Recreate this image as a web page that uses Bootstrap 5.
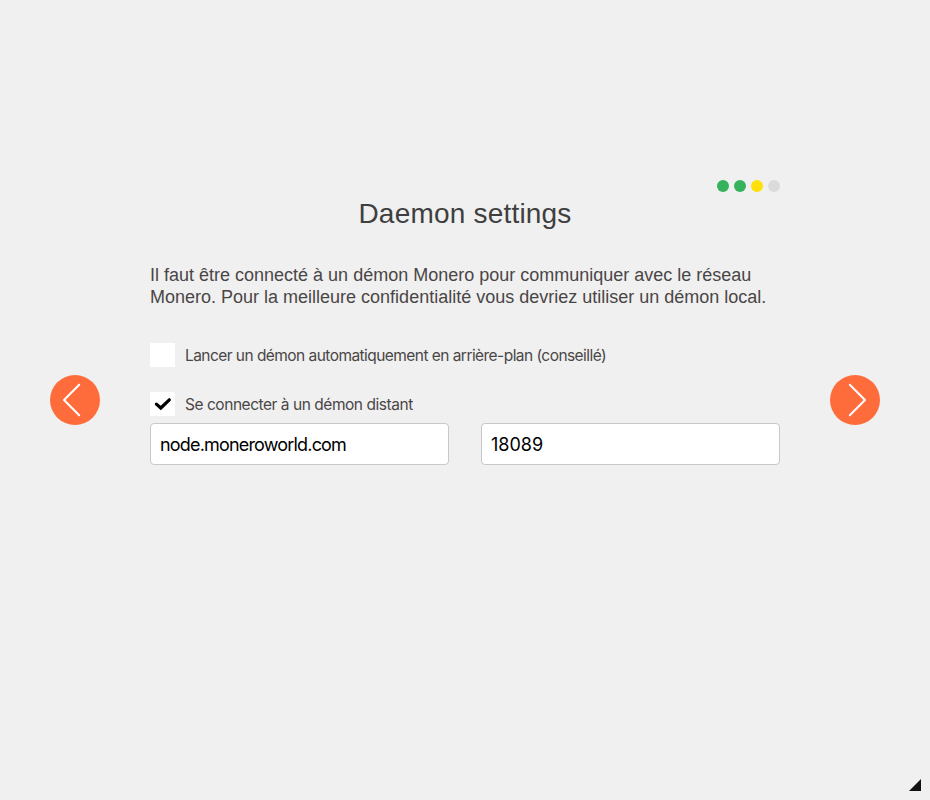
<!DOCTYPE html>
<html lang="fr">
<head>
<meta charset="utf-8">
<meta name="viewport" content="width=device-width, initial-scale=1">
<title>Daemon settings</title>
<link href="https://cdn.jsdelivr.net/npm/bootstrap@5.3.0/dist/css/bootstrap.min.css" rel="stylesheet">
<style>
body { background: #f0f0f0; color: #4a4646; font-family: "Liberation Sans", Arial, sans-serif; }
.wizard { height: 800px; padding: 0 50px; }
.nav-round { width: 50px; height: 50px; background: #ff6c3c; }
.nav-round:hover { background: #ff6c3c; }
.page-body { width: 630px; height: 800px; padding-top: 180px; }
.steps { gap: 5px; height: 12px; }
.dot { width: 12px; height: 12px; background: #dbdbdb; }
.dot-done { background: #36b25c; }
.dot-now { background: #ffe00a; }
.page-title { font-size: 28px; line-height: 32px; margin: 6px 0 0; color: #3f3f3f; letter-spacing: .2px; }
.intro { font-size: 18px; line-height: 22px; margin: 34px 0 0; white-space: nowrap; }
.option { gap: 10px; height: 24px; font-family: Inter, "Open Sans", sans-serif; font-size: 15.5px; line-height: 26px; }
.option-auto { margin-top: 35px; letter-spacing: -.55px; }
.option-remote { margin-top: 25px; letter-spacing: -.46px; }
.box { width: 25px; height: 24px; }
.fields { gap: 32px; margin-top: 7px; }
.field { height: 42px; padding: 0 9px; border: 1px solid #c9c9c9; border-radius: 4px; color: #000; font-family: Inter, "Open Sans", sans-serif; font-size: 18px; letter-spacing: 0; }
.field-host { letter-spacing: -.82px; }
.grip { right: 9px; bottom: 9px; }
</style>
</head>
<body class="overflow-hidden">
<main class="wizard position-relative d-flex align-items-center justify-content-between">
  <button type="button" class="nav-round btn border-0 rounded-circle p-0 d-flex" aria-label="Précédent">
    <svg width="50" height="50" viewBox="0 0 50 50" fill="none" stroke="#fff" stroke-width="2" stroke-linecap="round" stroke-linejoin="round"><path d="M29.2 9.8 14 25 29.2 40.2"/></svg>
  </button>
  <section class="page-body">
    <div class="steps d-flex justify-content-end">
      <span class="dot dot-done rounded-circle"></span>
      <span class="dot dot-done rounded-circle"></span>
      <span class="dot dot-now rounded-circle"></span>
      <span class="dot rounded-circle"></span>
    </div>
    <h1 class="page-title text-center fw-normal">Daemon settings</h1>
    <p class="intro">Il faut être connecté à un démon Monero pour communiquer avec le réseau<br>Monero. Pour la meilleure confidentialité vous devriez utiliser un démon local.</p>
    <div class="option option-auto d-flex">
      <span class="box bg-white" role="checkbox" aria-checked="false"></span>
      <span>Lancer un démon automatiquement en arrière-plan (conseillé)</span>
    </div>
    <div class="option option-remote d-flex">
      <span class="box bg-white d-flex" role="checkbox" aria-checked="true">
        <svg width="25" height="24" viewBox="0 0 25 24" fill="none" stroke="#000" stroke-width="3.2" stroke-linecap="round" stroke-linejoin="miter"><path d="M6.4 12.1 10.8 16 19.3 7.8"/></svg>
      </span>
      <span>Se connecter à un démon distant</span>
    </div>
    <div class="fields d-flex">
      <input class="form-control field field-host" type="text" value="node.moneroworld.com" aria-label="Hôte">
      <input class="form-control field" type="text" value="18089" aria-label="Port">
    </div>
  </section>
  <button type="button" class="nav-round btn border-0 rounded-circle p-0 d-flex" aria-label="Suivant">
    <svg width="50" height="50" viewBox="0 0 50 50" fill="none" stroke="#fff" stroke-width="2" stroke-linecap="round" stroke-linejoin="round"><path d="M19.8 9.8 35 25 19.8 40.2"/></svg>
  </button>
  <svg class="grip position-absolute" width="12" height="12" viewBox="0 0 12 12"><path d="M12 0V12H0Z" fill="#111"/></svg>
</main>
<script src="https://cdn.jsdelivr.net/npm/bootstrap@5.3.0/dist/js/bootstrap.bundle.min.js"></script>
</body>
</html>
